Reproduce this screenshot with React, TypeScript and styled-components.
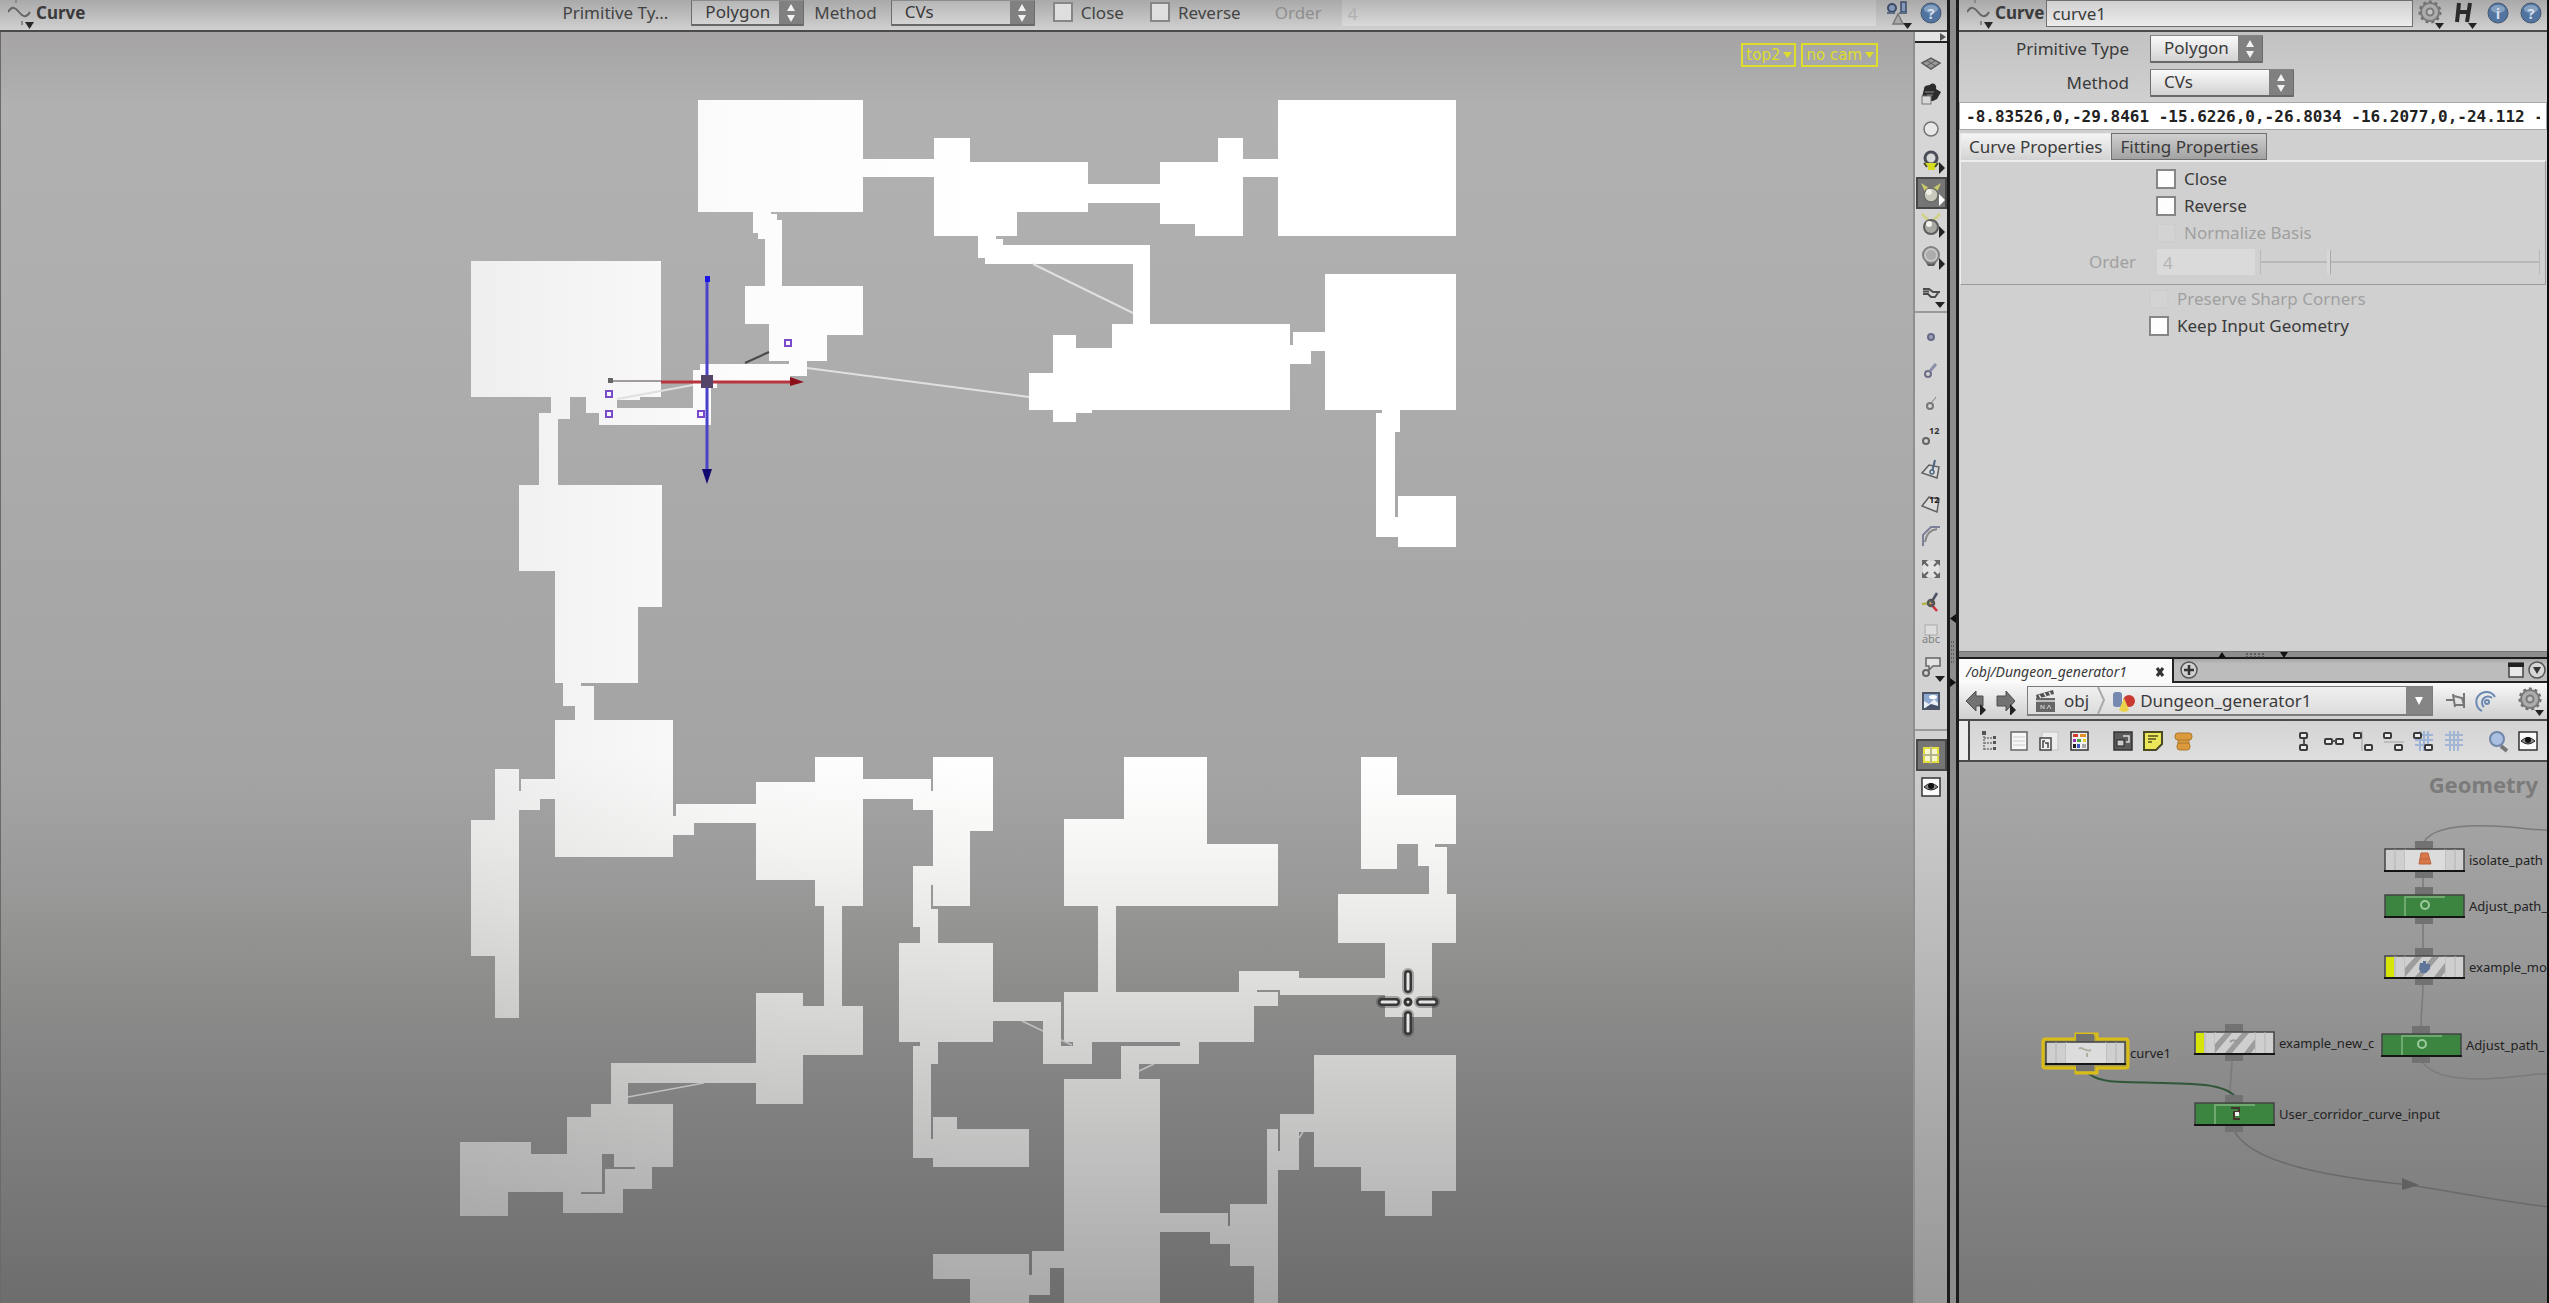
import React from "react";
import styled, { createGlobalStyle, css } from "styled-components";

const UI_FONT = `"Noto Sans", "Open Sans", sans-serif`;

const Global = createGlobalStyle`
  *, *::before, *::after { box-sizing: border-box; }
  html, body { margin: 0; height: 100%; background: #8c8c8c; }
  body { font-family: ${UI_FONT}; font-size: 17px; line-height: 20px; color: #3a3a3a; overflow: hidden; }
  button, input, select { font: inherit; color: inherit; margin: 0; }
`;

/* ---------- frame ---------- */

const Desktop = styled.div`
  display: grid;
  grid-template-columns: minmax(0, 1fr) 12px 590px;
  height: 100vh;
`;

const LeftPane = styled.main`
  display: flex;
  flex-direction: column;
  min-width: 0;
  min-height: 0;
`;

const RightPane = styled.aside`
  display: grid;
  grid-template-rows: minmax(0, 651fr) 8px minmax(0, 644fr);
  min-height: 0;
  border-right: 2px solid #0c0c0c;
`;

const VSplit = styled.div`
  position: relative;
  background: #8d8d8d;
  border-left: 3px solid #1c1c1c;
  border-right: 3px solid #1c1c1c;
`;

const VHandle = styled.svg`
  position: absolute;
  left: 0;
  top: 47%;
  width: 8px;
  height: 90px;
`;

const HSplit = styled.div`
  background: #8d8d8d;
  border-top: 1px solid #777;
  border-bottom: 2px solid #1c1c1c;
  display: flex;
  justify-content: center;
`;

const Svg = styled.svg<{ $w?: number; $h?: number }>`
  display: block;
  flex: none;
  width: ${(p) => p.$w ?? 24}px;
  height: ${(p) => p.$h ?? 24}px;
`;

/* ---------- shared controls ---------- */

const IconButton = styled.button<{ $active?: boolean; $w?: number; $h?: number }>`
  display: flex;
  align-items: center;
  justify-content: center;
  flex: none;
  width: ${(p) => p.$w ?? 30}px;
  height: ${(p) => p.$h ?? 30}px;
  padding: 0;
  border: 0;
  background: none;
  ${(p) =>
    p.$active &&
    css`
      background: #757575;
      border: 2px solid #484848;
    `}
`;

const Bar = styled.header`
  display: flex;
  align-items: flex-start;
  flex: none;
  height: 32px;
  background: linear-gradient(#a9a9a9, #d0d0d0);
  border-bottom: 2px solid #4a4a4a;
  padding-left: 8px;
`;

const BarTitle = styled.strong`
  font-weight: 700;
  line-height: 25px;
`;

const BarLabel = styled.label<{ $off?: boolean }>`
  line-height: 26px;
  white-space: nowrap;
  color: ${(p) => (p.$off ? "#8f8f8f" : "#444")};
`;

const Combo = styled.span<{ $w: number; $flat?: boolean }>`
  display: flex;
  flex: none;
  width: ${(p) => p.$w}px;
  height: ${(p) => (p.$flat ? 26 : 28)}px;
  border: 1px solid #6c6c6c;
  border-top-color: ${(p) => (p.$flat ? "#8c8c8c" : "#848484")};
  border-bottom: 2px solid #686868;
  background: ${(p) =>
    p.$flat ? "linear-gradient(#b6b6b6, #d4d4d4)" : "linear-gradient(#fafafa, #d2d2d2)"};
  border-radius: 1px;
  select {
    appearance: none;
    flex: 1;
    min-width: 0;
    border: 0;
    background: none;
    padding: 0 0 2px 13px;
    line-height: 20px;
  }
`;

const ComboArrows = styled.span`
  display: flex;
  align-items: center;
  justify-content: center;
  width: 24px;
  background: #808080;
`;

const Check = styled.input<{ $dim?: boolean }>`
  appearance: none;
  flex: none;
  width: 20px;
  height: 20px;
  border: 2px solid #868686;
  background: ${(p) => (p.$dim ? "#dedede" : "#fdfdfd")};
  &:disabled {
    border-color: #cecece;
    background: #d3d3d3;
  }
`;

function Select({ id, value, w, flat, label }: { id: string; value: string; w: number; flat?: boolean; label?: string }) {
  return (
    <Combo $w={w} $flat={flat}>
      <select id={id} defaultValue={value} aria-label={label}>
        <option>{value}</option>
      </select>
      <ComboArrows aria-hidden="true">
        <Svg $w={10} $h={22} viewBox="0 0 10 22">
          <path d="M5 2 L9 9 H1 Z M5 20 L9 13 H1 Z" fill="#f2f2f2" />
        </Svg>
      </ComboArrows>
    </Combo>
  );
}

/* ---------- icons ---------- */

const CurveIcon = () => (
  <Svg $w={28} $h={30} viewBox="0 0 28 30">
    <path d="M0 12 C4 5 8 8 11 12 S18 19 22 12" fill="none" stroke="#666" strokeWidth="2" />
    <path d="M8 0 V3 M14 21 V25" stroke="#888" strokeWidth="2" />
    <path d="M17 22 h9 l-4.500 7 z" fill="#262626" />
  </Svg>
);

const Badge = ({ letter, label }: { letter: string; label: string }) => (
  <IconButton $h={28} $w={33} aria-label={label}>
    <Svg viewBox="0 0 24 24">
      <circle cx="12" cy="11" r="10" fill="#5274a0" stroke="#42566f" />
      <ellipse cx="12" cy="7" rx="7" ry="4" fill="#86a0c0" />
      <text x="12" y="17" textAnchor="middle" fontFamily={UI_FONT} fontWeight="700" fontSize="15" fill="#d3dcea">
        {letter}
      </text>
    </Svg>
  </IconButton>
);

const GearShape = () => (
  <>
    <circle cx="12" cy="12" r="9" fill="#acacac" stroke="#7a7a7a" strokeWidth="2" />
    <circle cx="12" cy="12" r="10.500" fill="none" stroke="#6e6e6e" strokeWidth="2" strokeDasharray="3 3" />
    <circle cx="12" cy="12" r="3.500" fill="#c4c4c4" stroke="#7a7a7a" strokeWidth="2" />
    <path d="M17 23 h9 l-4.500 6 z" fill="#222" />
  </>
);

const Flag = ({ light }: { light?: boolean }) => <path d="M22 15 l6 6 l-6 6 z" fill={light ? "#fff" : "#222"} />;

/* each glyph is drawn on a 28 x 28 grid centred in its slot */
const strip: Record<string, React.ReactNode> = {
  plane: (
    <g fill="none" stroke="#5c5c5c">
      <path d="M5 14 L14 9 L23 14 L14 20 Z" fill="#999" strokeWidth="1.500" />
      <path d="M9.500 11.500 L18.500 17 M18.500 11.500 L9.500 17" />
    </g>
  ),
  camera: (
    <g>
      <path d="M7 9 C7 4 13 6 14 4 C18 2 20 7 19 9 L24 12 L20 19 L16 21 H9 L5 17 Z" fill="#2c2c2c" />
      <path d="M8 12 h9 M10 15 h6" stroke="#8a8a8a" />
      <rect x="5" y="16" width="9" height="8" fill="#d8d8d8" stroke="#777" />
    </g>
  ),
  light: <circle cx="14" cy="14" r="7" fill="#e8e8e8" stroke="#737373" strokeWidth="1.500" />,
  headlight: (
    <g>
      <circle cx="14" cy="11" r="6" fill="#d8d8d8" stroke="#4b4e58" strokeWidth="3" />
      <path d="M7 16 h14 l-3 3 v4 h-7 v-4 z" fill="#d8dc1e" />
      <path d="M7 16 l3 4 M21 16 l-3 4" stroke="#4a4a20" strokeWidth="2" />
      <Flag />
    </g>
  ),
  normal: (
    <g>
      <path d="M4 4 l8 5 l-4 4 z M24 4 l-8 5 l4 4 z" fill="#c8ca6a" />
      <circle cx="14" cy="16" r="7" fill="#c9c9bd" stroke="#6d6d66" strokeWidth="1.500" />
      <circle cx="12" cy="13" r="3" fill="#efefe8" />
      <Flag light />
    </g>
  ),
  quality: (
    <g>
      <path d="M5 3 l6 6 M23 3 l-6 6" stroke="#d0d28a" strokeWidth="3" />
      <circle cx="14" cy="16" r="7" fill="#a9a9a4" stroke="#5c5c5c" strokeWidth="2" />
      <circle cx="12" cy="13" r="3" fill="#f3f3ee" />
      <Flag />
    </g>
  ),
  shadow: (
    <g>
      <path d="M8 18 h12 l-3 5 h-6 z" fill="#5b5b5b" />
      <circle cx="14" cy="12" r="8" fill="#c6c6c6" stroke="#808080" strokeWidth="2" />
      <circle cx="14" cy="12" r="5" fill="#acacac" />
      <Flag />
    </g>
  ),
  hand: (
    <g>
      <path d="M6 9 h6 l4 3 h7 M6 14 h5 l3 3 h4 l3 -4 M6 11.500 h6" fill="none" stroke="#4b4b4b" strokeWidth="2" />
      <path d="M18 22 h10 l-5 6 z" fill="#222" />
    </g>
  ),
  point: <circle cx="14" cy="13" r="3" fill="#9c9fb5" stroke="#666987" strokeWidth="2" />,
  normalPoint: (
    <g fill="none" stroke="#6c6f86" strokeWidth="2">
      <circle cx="11" cy="17" r="3" />
      <path d="M13 14 l6 -7" strokeWidth="3" stroke="#8b8fa9" />
    </g>
  ),
  trail: (
    <g fill="none" stroke="#777" strokeWidth="2">
      <circle cx="13" cy="16" r="3" />
      <path d="M15 12 l4 -5" strokeWidth="1" />
    </g>
  ),
  pointNumber: (
    <g>
      <circle cx="9" cy="18" r="3" fill="none" stroke="#666" strokeWidth="2" />
      <text x="12" y="11" fontSize="9" fontWeight="700" fontFamily={UI_FONT} fill="#333">12</text>
    </g>
  ),
  primNormal: (
    <g fill="#dcdcdc" stroke="#5f5f5f" strokeWidth="1.500">
      <path d="M5 17 L12 9 L22 11 L20 22 Z" />
      <path d="M15 16 L18 4" stroke="#4d6680" strokeWidth="2" />
      <circle cx="15" cy="16" r="2" stroke="#4d6680" />
    </g>
  ),
  primNumber: (
    <g>
      <path d="M5 17 L12 8 L22 10 L20 23 Z" fill="#dcdcdc" stroke="#5f5f5f" strokeWidth="1.500" />
      <text x="12" y="14" fontSize="9" fontWeight="700" fontFamily={UI_FONT} fill="#222">12</text>
    </g>
  ),
  hull: (
    <g fill="none" strokeWidth="2">
      <path d="M6 24 V13 L14 5 H23" stroke="#7c8098" />
      <path d="M8 20 C9 13 13 8 20 7" stroke="#858585" />
    </g>
  ),
  bounds: (
    <g>
      <rect x="6" y="6" width="16" height="16" fill="#e2e2e2" />
      <path d="M5 5 h6 l-6 6 z M23 5 h-6 l6 6 z M5 23 h6 l-6 -6 z M23 23 h-6 l6 -6 z" fill="#666" />
      <path d="M6 6 l5 5 M22 6 l-5 5 M6 22 l5 -5 M22 22 l-5 -5" stroke="#666" strokeWidth="2" />
    </g>
  ),
  axes: (
    <g fill="none" strokeWidth="2.500">
      <path d="M14 15 L20 5" stroke="#4a5364" />
      <path d="M14 15 L5 16" stroke="#b5b34e" />
      <path d="M14 16 L20 23" stroke="#d02c3a" />
      <circle cx="14" cy="15" r="3" stroke="#555" />
    </g>
  ),
  label: (
    <g>
      <rect x="8" y="4" width="12" height="10" fill="#dcdcdc" stroke="#aaa" />
      <text x="14" y="22" textAnchor="middle" fontSize="11" fontFamily={UI_FONT} fill="#808080">abc</text>
    </g>
  ),
  note: (
    <g>
      <path d="M9 4 h14 v8 h-7 l-4 4 v-4 h-3 z" fill="#e3e3e3" stroke="#666" strokeWidth="1.500" />
      <circle cx="9" cy="19" r="3" fill="none" stroke="#666" strokeWidth="2" />
      <path d="M18 22 h10 l-5 6 z" fill="#222" />
    </g>
  ),
  image: (
    <g>
      <rect x="6" y="6" width="16" height="16" fill="#8ea9cf" stroke="#4c5666" strokeWidth="2" />
      <path d="M7 20 V14 l5 3 l5 -5 l4 4 v5 h-14 z" fill="#e9eef5" />
      <path d="M8 21 l6 -4 l7 2 v2 z" fill="#47536b" />
      <ellipse cx="16" cy="10" rx="4" ry="2" fill="#fff" />
    </g>
  ),
  grid: (
    <g>
      <rect x="6" y="6" width="16" height="16" fill="#e4e23a" />
      <path d="M8 8 h5 v5 h-5 z M15 8 h5 v5 h-5 z M8 15 h5 v5 h-5 z M15 15 h5 v5 h-5 z" fill="#f5f5cf" />
      <path d="M14 5 V23 M5 14 H23" stroke="#a8a8a0" strokeWidth="1.500" />
    </g>
  ),
  eye: (
    <g>
      <rect x="5" y="5" width="18" height="18" fill="#fafafa" stroke="#333" strokeWidth="1.500" />
      <path d="M7 14 Q14 7 21 14 Q14 20 7 14 Z" fill="#8b8b8b" stroke="#222" />
      <circle cx="14" cy="13" r="3" fill="#111" />
    </g>
  ),
};

/* ---------- 3D viewport ---------- */

const Stage = styled.div`
  display: flex;
  flex: 1;
  min-height: 0;
`;

const Viewport = styled.section`
  position: relative;
  flex: 1;
  min-width: 0;
  overflow: hidden;
  background: linear-gradient(
    #a6a4a5 0%, #b1b1b1 6%, #aeaeae 22%, #a9a9a9 37%, #a4a4a4 58%, #9b9b9b 66%,
    #90908e 73%, #868686 80%, #7c7c7c 88%, #727272 96%, #6d6d6d 100%
  );
  border-left: 1px solid #6a6a6a;
`;

const Scene = styled.svg`
  display: block;
  width: 100%;
  height: 100%;
`;

const CameraMenus = styled.nav`
  position: absolute;
  top: 11px;
  right: 35px;
  display: flex;
  gap: 5px;
`;

const CameraButton = styled.button`
  display: flex;
  align-items: center;
  gap: 3px;
  height: 24px;
  padding: 0 2px 0 3px;
  border: 2px solid #dede2a;
  background: none;
  font-family: "DejaVu Sans", sans-serif;
  font-size: 15px;
  color: #dede2a;
  line-height: 20px;
`;

const dungeon =
  "698,100 863,100 863,159 934,159 934,138 970,138 970,162 1088,162 1088,184 1160,184 1160,162 1218,162 1218,138 1243,138 1243,159 1278,159 1278,100 1456,100 1456,236 1278,236 1278,177 1243,177 1243,236 1195,236 1195,224 1160,224 1160,203 1088,203 1088,212 1017,212 1017,236 996,236 996,239 1003,239 1003,245 1150,245 1150,324 1290,324 1290,345 1293,345 1293,332 1325,332 1325,274 1456,274 1456,410 1400,410 1400,432 1395,432 1395,517 1398,517 1398,496 1456,496 1456,547 1398,547 1398,537 1376,537 1376,413 1382,413 1382,410 1325,410 1325,351 1311,351 1311,364 1290,364 1290,410 1092,410 1092,413 1076,413 1076,422 1053,422 1053,410 1029,410 1029,373 1053,373 1053,335 1076,335 1076,348 1112,348 1112,324 1133,324 1133,264 985,264 985,258 978,258 978,236 934,236 934,177 863,177 863,212 771,212 771,214 777,214 777,220 782,220 782,286 863,286 863,335 827,335 827,361 807,361 807,376 790,376 790,381 717,381 717,388 711,388 711,425 599,425 599,413 586,413 586,397 570,397 570,419 558,419 558,485 662,485 662,607 638,607 638,683 581,683 581,686 594,686 594,720 673,720 673,816 676,816 676,804 756,804 756,782 815,782 815,757 863,757 863,779 931,779 931,791 933,791 933,757 993,757 993,831 970,831 970,906 933,906 933,885 931,885 931,909 938,909 938,943 993,943 993,1002 1061,1002 1061,1046 1073,1046 1073,1042 1064,1042 1064,992 1098,992 1098,906 1064,906 1064,819 1124,819 1124,757 1207,757 1207,844 1278,844 1278,906 1116,906 1116,992 1239,992 1239,971 1299,971 1299,978 1385,978 1385,943 1338,943 1338,894 1429,894 1429,866 1418,866 1418,844 1397,844 1397,869 1361,869 1361,757 1397,757 1397,795 1456,795 1456,844 1435,844 1435,847 1447,847 1447,894 1456,894 1456,943 1432,943 1432,1017 1385,1017 1385,995 1280,995 1280,990 1257,990 1257,992 1278,992 1278,1006 1254,1006 1254,1042 1199,1042 1199,1064 1139,1064 1139,1079 1160,1079 1160,1213 1228,1213 1228,1226 1230,1226 1230,1204 1267,1204 1267,1129 1278,1129 1278,1151 1280,1151 1280,1114 1314,1114 1314,1055 1456,1055 1456,1191 1432,1191 1432,1216 1385,1216 1385,1191 1361,1191 1361,1167 1314,1167 1314,1132 1299,1132 1299,1170 1278,1170 1278,1310 1254,1310 1254,1266 1230,1266 1230,1244 1210,1244 1210,1232 1160,1232 1160,1310 1064,1310 1064,1268 1050,1268 1050,1295 1029,1295 1029,1310 970,1310 970,1279 933,1279 933,1254 1029,1254 1029,1275 1032,1275 1032,1251 1064,1251 1064,1079 1121,1079 1121,1046 1180,1046 1180,1042 1092,1042 1092,1064 1043,1064 1043,1021 993,1021 993,1042 938,1042 938,1064 931,1064 931,1139 933,1139 933,1117 957,1117 957,1129 1029,1129 1029,1167 933,1167 933,1158 913,1158 913,1046 920,1046 920,1042 899,1042 899,943 920,943 920,927 913,927 913,866 933,866 933,810 913,810 913,799 863,799 863,906 842,906 842,1006 863,1006 863,1055 803,1055 803,1104 756,1104 756,1083 628,1083 628,1104 673,1104 673,1167 652,1167 652,1189 623,1189 623,1213 563,1213 563,1192 508,1192 508,1216 460,1216 460,1142 531,1142 531,1154 567,1154 567,1117 591,1117 591,1104 611,1104 611,1063 756,1063 756,993 803,993 803,1006 824,1006 824,906 815,906 815,880 756,880 756,823 694,823 694,835 673,835 673,857 555,857 555,799 540,799 540,810 519,810 519,1018 495,1018 495,956 471,956 471,820 495,820 495,769 519,769 519,791 521,791 521,779 555,779 555,720 575,720 575,706 563,706 563,683 555,683 555,571 519,571 519,485 539,485 539,413 551,413 551,397 471,397 471,261 661,261 661,397 640,397 640,400 617,400 617,408 693,408 693,370 700,370 700,364 789,364 789,361 769,361 769,324 745,324 745,286 765,286 765,239 758,239 758,233 753,233 753,212 698,212";

const crosshair = "M1408 974 V989 M1408 1015 V1031 M1382 1002 H1396 M1420 1002 H1434";

const points = [[788, 343], [609, 394], [609, 414], [701, 414]];

function DungeonScene() {
  return (
    <Scene role="img" aria-label="Dungeon layout, top view">
      <defs>
        <linearGradient id="fall" gradientUnits="userSpaceOnUse" x1="0" y1="0" x2="0" y2="1303">
          <stop offset="0" stopColor="#fff" />
          <stop offset="0.58" stopColor="#fff" />
          <stop offset="0.65" stopColor="#f6f6f5" />
          <stop offset="0.7" stopColor="#ebebea" />
          <stop offset="0.77" stopColor="#dadad9" />
          <stop offset="0.84" stopColor="#cacac9" />
          <stop offset="0.92" stopColor="#b9b9b9" />
          <stop offset="1" stopColor="#a8a8a8" />
        </linearGradient>
        <linearGradient id="side" gradientUnits="userSpaceOnUse" x1="470" y1="0" x2="1000" y2="0">
          <stop offset="0" stopColor="#000" stopOpacity="0.065" />
          <stop offset="0.5" stopColor="#000" stopOpacity="0.014" />
          <stop offset="1" stopColor="#000" stopOpacity="0" />
        </linearGradient>
      </defs>
      <g transform="translate(-1 -32)">
        <polygon points={dungeon} fill="url(#fall)" />
        <polygon points={dungeon} fill="url(#side)" />
        <path d="M602 1154 H614 V1167 H635 V1169 H605 V1194 H581 V1192 H602 Z" fill="#7b7b7b" />
        <g fill="none" stroke="#e0e0e0" strokeWidth="2">
          <path d="M1033 264 L1133 313 M807 368 L1029 397" />
          <path d="M617 399 L693 385" />
          <path d="M628 1097 L704 1083 M1022 1021 L1043 1031 M1139 1071 L1154 1064 M1061 1040 L1072 1045 M1299 1138 L1303 1132" stroke="#c0c0c0" strokeWidth="1.500" />
        </g>
        <path d="M745 363 L769 352" stroke="#484848" strokeWidth="2" />
        <path d="M611 381 H661" stroke="#a39c9c" strokeWidth="2" />
        <path d="M661 382 H792" stroke="#b8343f" strokeWidth="3" />
        <path d="M790 377 L804 382 L790 386 Z" fill="#8d0f1a" />
        <rect x="608" y="378" width="5" height="5" fill="#666" />
        <path d="M707 278 V470" stroke="#4a42c8" strokeWidth="3" />
        <rect x="705" y="276" width="5" height="6" fill="#1b16e6" />
        <path d="M702 469 H712 L707 484 Z" fill="#120a70" />
        <rect x="701" y="375" width="12" height="13" fill="#544467" />
        {points.map(([x, y]) => (
          <rect key={`${x}-${y}`} x={x - 3} y={y - 3} width="6" height="6" fill="#f7f5fb" stroke="#7a4bc8" strokeWidth="2" />
        ))}
        <g strokeLinecap="round" fill="none">
          <path d={crosshair} stroke="#222" strokeOpacity="0.3" strokeWidth="12" />
          <path d={crosshair} stroke="#383838" strokeWidth="8" />
          <path d={crosshair} stroke="#e6e6e6" strokeWidth="3" />
          <circle cx="1408" cy="1002" r="3" stroke="#333" strokeWidth="3" />
        </g>
      </g>
    </Scene>
  );
}

const Strip = styled.nav`
  display: flex;
  flex-direction: column;
  align-items: stretch;
  flex: none;
  width: 34px;
  border-left: 2px solid #8f8f8f;
  background: linear-gradient(#d6d6d6 0%, #d2d2d2 55%, #c8c8c8 62%, #a9a9a9 85%, #989898 100%);
`;

const StripHead = styled.div`
  display: flex;
  justify-content: flex-end;
  align-items: center;
  height: 11px;
  margin-bottom: 4px;
  background: #e4e4e4;
  border-bottom: 2px solid #222;
`;

const StripGroup = styled.div<{ $gap?: number }>`
  display: flex;
  flex-direction: column;
  align-items: center;
  padding-bottom: ${(p) => p.$gap ?? 4}px;
`;

const StripRule = styled.hr`
  width: 100%;
  margin: 0;
  border: 0;
  border-top: 2px solid #9a9a9a;
`;

function StripButton({ name, h = 32, active }: { name: string; h?: number; active?: boolean }) {
  return (
    <IconButton $w={31} $h={h} $active={active} aria-label={name}>
      <Svg $w={28} $h={28} viewBox="0 0 28 28">
        {strip[name]}
      </Svg>
    </IconButton>
  );
}

/* ---------- operation toolbar ---------- */

const Field = styled.span<{ $gap: number; $after?: number }>`
  display: flex;
  align-items: flex-start;
  flex: none;
  gap: ${(p) => p.$gap}px;
  margin-right: ${(p) => p.$after ?? 0}px;
`;

const Spacer = styled.span<{ $w: number }>`
  flex: 0 1 ${(p) => p.$w}px;
`;

const GhostInput = styled.input`
  flex: 1;
  min-width: 0;
  height: 26px;
  margin-right: 8px;
  padding: 0 6px;
  border: 0;
  background: linear-gradient(#b5b5b5, #d9d9d9);
  &:disabled { color: #b0b0b0; }
`;

const TopCheck = styled(Check)`
  margin-top: 2px;
`;

function OperationBar() {
  return (
    <Bar>
      <CurveIcon />
      <BarTitle>Curve</BarTitle>
      <Spacer $w={477} />
      <Field $gap={23} $after={10}>
        <BarLabel htmlFor="op-type">Primitive Ty...</BarLabel>
        <Select id="op-type" value="Polygon" w={113} flat />
      </Field>
      <Field $gap={14} $after={18}>
        <BarLabel htmlFor="op-method">Method</BarLabel>
        <Select id="op-method" value="CVs" w={144} flat />
      </Field>
      <Field $gap={8} $after={26}>
        <TopCheck type="checkbox" id="op-close" $dim />
        <BarLabel htmlFor="op-close">Close</BarLabel>
      </Field>
      <Field $gap={8} $after={34}>
        <TopCheck type="checkbox" id="op-reverse" $dim />
        <BarLabel htmlFor="op-reverse">Reverse</BarLabel>
      </Field>
      <Field $gap={20} $after={20}>
        <BarLabel htmlFor="op-order" $off>Order</BarLabel>
      </Field>
      <GhostInput id="op-order" defaultValue="4" disabled />
      <IconButton $w={30} aria-label="Handle options">
        <Svg $w={28} $h={30} viewBox="0 0 28 30">
          <circle cx="7" cy="8" r="4" fill="#8398b8" stroke="#3c4b66" strokeWidth="2" />
          <rect x="16" y="2" width="5" height="10" fill="#8398b8" stroke="#3c4b66" strokeWidth="1.500" />
          <path d="M2 13 h8 M14 13 h8" stroke="#5c6b86" strokeWidth="2" />
          <path d="M13 14 l5 10 h-10 z" fill="#aaa" stroke="#777" strokeWidth="1.500" />
          <path d="M18 23 h9 l-4.500 6 z" fill="#222" />
        </Svg>
      </IconButton>
      <Badge letter="?" label="Help" />
    </Bar>
  );
}

/* ---------- parameter editor ---------- */

const Params = styled.section`
  background: #d0d0d0;
  min-height: 0;
  overflow: hidden;
`;

const NameInput = styled.input`
  flex: 1;
  min-width: 0;
  height: 27px;
  margin-left: 2px;
  padding: 0 5px;
  border: 1px solid #6f6f6f;
  background: linear-gradient(#d0d0d0, #ececec);
`;

const ParamRows = styled.div`
  display: flex;
  flex-direction: column;
  gap: 6px;
  padding: 3px 0 5px;
  background: linear-gradient(#c2c2c2, #d0d0d0);
`;

const ParamRow = styled.div`
  display: grid;
  grid-template-columns: 170px 1fr;
  align-items: center;
  column-gap: 21px;
`;

const ParamLabel = styled.label<{ $off?: boolean }>`
  text-align: right;
  white-space: nowrap;
  color: ${(p) => (p.$off ? "#a0a0a0" : "#3a3a3a")};
`;

const CoordInput = styled.input`
  display: block;
  width: 100%;
  height: 28px;
  padding: 0 6px;
  border: 1px solid #a8a8a8;
  background: #fff;
  font-family: "DejaVu Sans Mono", monospace;
  font-size: 16px;
  font-weight: 700;
  color: #222;
`;

const Tabs = styled.div`
  display: flex;
  margin-top: 3px;
  padding-left: 1px;
`;

const Tab = styled.button<{ $on?: boolean }>`
  height: 27px;
  padding: 0 8px;
  border: 1px solid ${(p) => (p.$on ? "#e8e8e8" : "#6f6f6f")};
  border-bottom: ${(p) => (p.$on ? "0" : "1px solid #6f6f6f")};
  background: ${(p) => (p.$on ? "linear-gradient(#f5f5f5, #d2d2d2)" : "linear-gradient(#d0d0d0, #a2a2a2)")};
  white-space: nowrap;
`;

const TabBody = styled.div`
  display: flex;
  flex-direction: column;
  height: 125px;
  margin: 0 1px;
  padding: 3px 0 0;
  border: 1px solid #9b9b9b;
  border-top: 2px solid #ededed;
  border-left-color: #ededed;
`;

const CheckRow = styled.div<{ $indent: number; $h?: number }>`
  display: flex;
  align-items: center;
  gap: 8px;
  height: ${(p) => p.$h ?? 27}px;
  padding-left: ${(p) => p.$indent}px;
`;

const OrderRow = styled.div`
  display: grid;
  grid-template-columns: 175px 98px 1fr;
  align-items: center;
  column-gap: 21px;
  height: 32px;
  padding-right: 5px;
`;

const OrderInput = styled.input`
  width: 98px;
  height: 26px;
  padding: 0 6px;
  border: 0;
  background: #dadada;
  &:disabled { color: #b4b4b4; }
`;

const Slider = styled.input`
  appearance: none;
  display: block;
  width: calc(100% + 16px);
  height: 24px;
  margin-left: -16px;
  background: linear-gradient(#b9b9b9, #b9b9b9) center / 100% 2px no-repeat;
  border-left: 1px solid #b9b9b9;
  border-right: 1px solid #b9b9b9;
  &::-webkit-slider-thumb {
    appearance: none;
    width: 4px;
    height: 24px;
    border-right: 1px solid #a8a8a8;
    background: #d8d8d8;
  }
`;

function ParamCheck({ id, label, indent, off, h }: { id: string; label: string; indent: number; off?: boolean; h?: number }) {
  return (
    <CheckRow $indent={indent} $h={h}>
      <Check type="checkbox" id={id} disabled={off} />
      <ParamLabel htmlFor={id} $off={off}>{label}</ParamLabel>
    </CheckRow>
  );
}

function ParameterPane() {
  return (
    <Params>
      <Bar>
        <CurveIcon />
        <BarTitle>Curve</BarTitle>
        <NameInput aria-label="Node name" defaultValue="curve1" />
        <IconButton $w={34} aria-label="Settings">
          <Svg $w={30} $h={30} viewBox="-3 0 30 30"><GearShape /></Svg>
        </IconButton>
        <IconButton $w={34} aria-label="Houdini help">
          <Svg $w={28} $h={30} viewBox="-1 0 28 30">
            <path d="M8 3 L6 22 M19 3 L16 22 M7 12 H18" stroke="#2a2a2a" strokeWidth="4" fill="none" />
            <path d="M17 23 h9 l-4.500 6 z" fill="#222" />
          </Svg>
        </IconButton>
        <Badge letter="i" label="Info" />
        <Badge letter="?" label="Help" />
      </Bar>
      <ParamRows>
        <ParamRow>
          <ParamLabel htmlFor="p-type">Primitive Type</ParamLabel>
          <Select id="p-type" value="Polygon" w={113} />
        </ParamRow>
        <ParamRow>
          <ParamLabel htmlFor="p-method">Method</ParamLabel>
          <Select id="p-method" value="CVs" w={144} />
        </ParamRow>
      </ParamRows>
      <CoordInput aria-label="Coordinates" defaultValue="-8.83526,0,-29.8461 -15.6226,0,-26.8034 -16.2077,0,-24.112 -16.2077,0,-20.4" />
      <Tabs role="tablist">
        <Tab role="tab" aria-selected $on>Curve Properties</Tab>
        <Tab role="tab" aria-selected={false}>Fitting Properties</Tab>
      </Tabs>
      <TabBody>
        <ParamCheck id="p-close" label="Close" indent={195} />
        <ParamCheck id="p-reverse" label="Reverse" indent={195} />
        <ParamCheck id="p-basis" label="Normalize Basis" indent={195} off />
        <OrderRow>
          <ParamLabel htmlFor="p-order" $off>Order</ParamLabel>
          <OrderInput id="p-order" defaultValue="4" disabled />
          <Slider type="range" aria-label="Order" min={0} max={100} defaultValue={24} disabled />
        </OrderRow>
      </TabBody>
      <ParamCheck id="p-sharp" label="Preserve Sharp Corners" indent={190} off />
      <ParamCheck id="p-keep" label="Keep Input Geometry" indent={190} />
    </Params>
  );
}

/* ---------- network editor ---------- */

const Network = styled.section`
  display: flex;
  flex-direction: column;
  min-height: 0;
`;

const NetTabs = styled.div`
  display: flex;
  align-items: stretch;
  flex: none;
  height: 24px;
  background: linear-gradient(#a8a8a8, #bcbcbc 20%, #bcbcbc);
`;

const NetTab = styled.button`
  display: flex;
  align-items: center;
  justify-content: space-between;
  width: 215px;
  padding: 2px 7px 0;
  border: 0;
  border-right: 2px solid #222;
  background: #fbfbfb;
  font-size: 14px;
  font-style: italic;
`;

const NetTabRest = styled.div`
  display: flex;
  align-items: center;
  flex: 1;
  padding: 0 0 0 3px;
  border-bottom: 2px solid #222;
`;

const PathBar = styled.div`
  display: flex;
  align-items: center;
  flex: none;
  height: 36px;
  padding-left: 1px;
  background: linear-gradient(#f8f8f8, #cfcfcf);
`;

const PathBox = styled.div`
  display: flex;
  align-items: stretch;
  flex: 1;
  height: 30px;
  margin: 0 8px 0 5px;
  border: 1px solid #7c7c7c;
  border-bottom-width: 2px;
  background: linear-gradient(#f0f0f0, #dcdcdc);
`;

const Crumb = styled.button`
  display: flex;
  align-items: center;
  gap: 5px;
  padding: 0 5px;
  border: 0;
  background: none;
`;

const PathDrop = styled.button`
  display: flex;
  align-items: center;
  justify-content: center;
  width: 26px;
  margin-left: auto;
  padding: 0;
  border: 0;
  background: #858585;
`;

const Tools = styled.div`
  display: flex;
  align-items: center;
  flex: none;
  height: 43px;
  border-top: 2px solid #4a4a4a;
  border-bottom: 2px solid #4a4a4a;
  background: linear-gradient(#d4d4d4, #dedede);
`;

const ToolGrip = styled.div`
  align-self: stretch;
  width: 11px;
  margin-right: 4px;
  border-right: 2px solid #444;
  background: #ececec;
`;

const ToolGroup = styled.div<{ $after?: number; $push?: boolean }>`
  display: flex;
  margin-right: ${(p) => p.$after ?? 0}px;
  margin-left: ${(p) => (p.$push ? "auto" : 0)};
`;

const small = (x: number, y: number) => (
  <rect key={`${x}-${y}`} x={x} y={y} width="7" height="5" rx="1" fill="#eee" stroke="#3c3c3c" strokeWidth="2" />
);
const bars = "M10 4 V24 M14 4 V24 M18 4 V24 M5 8 H23 M5 13 H23 M5 18 H23";

const tools: Record<string, React.ReactNode> = {
  tree: (
    <g stroke="#777" fill="#555" strokeWidth="1.500">
      <path d="M9 6 V23 M9 11 H18 M9 16 H18 M9 22 H18" fill="none" strokeDasharray="2 1" />
      <path d="M7 4 h4 v4 h-4 z M18 9 h3 v3 h-3 z M18 14 h3 v3 h-3 z M18 20 h3 v3 h-3 z" stroke="none" />
    </g>
  ),
  list: (
    <g>
      <rect x="6" y="5" width="16" height="18" fill="#f7f7f7" stroke="#666" strokeWidth="1.500" />
      <path d="M8 10 H20 M8 14 H20 M8 18 H20" stroke="#ccc" />
    </g>
  ),
  page: (
    <g>
      <rect x="7" y="5" width="16" height="18" fill="#ececec" stroke="#c4c4c4" />
      <rect x="5" y="11" width="11" height="12" fill="#f0f0f0" stroke="#444" strokeWidth="1.500" />
      <path d="M8 21 V14 H10 M10 16 H13 V21" stroke="#444" fill="none" strokeWidth="1.500" />
    </g>
  ),
  palette: (
    <g>
      <rect x="6" y="5" width="17" height="18" fill="#f2f2f2" stroke="#333" strokeWidth="1.500" />
      <path d="M8 7 h5 v3 h-5 z" fill="#d23a2a" />
      <path d="M15 7 h6 v3 h-6 z" fill="#e0912a" />
      <path d="M8 12 h3 v3 h-3 z" fill="#9a2ac0" />
      <path d="M12 12 h4 v3 h-4 z" fill="#49a23a" />
      <path d="M18 12 h3 v3 h-3 z" fill="#e3d42a" />
      <path d="M8 17 h3 v4 h-3 z" fill="#222" />
      <path d="M12 17 h3 v4 h-3 z" fill="#3a55c0" />
      <path d="M17 17 h4 v4 h-4 z" fill="#aaa" />
    </g>
  ),
  box: (
    <g>
      <rect x="5" y="5" width="18" height="18" fill="#5b5b5b" stroke="#333" strokeWidth="1.500" />
      <rect x="8" y="13" width="7" height="6" fill="#ccc" stroke="#222" />
      <path d="M14 9 h6 v6 h-3" stroke="#ddd" fill="none" strokeWidth="1.500" />
    </g>
  ),
  sticky: (
    <g>
      <path d="M5 5 H23 V17 L17 23 H5 Z" fill="#ece65a" stroke="#4c4a20" strokeWidth="2" />
      <path d="M9 9 H19 M9 12 H17 M9 15 H13" stroke="#55521c" strokeWidth="1.500" />
    </g>
  ),
  dot: (
    <g fill="#dc9a3c" stroke="#a87830">
      <path d="M9 12 h11 v5 h-11 z" />
      <rect x="6" y="6" width="17" height="7" rx="3" />
      <rect x="8" y="16" width="13" height="7" rx="3" />
    </g>
  ),
  alignV: <g>{small(10, 6)}{small(10, 18)}<path d="M14 12 V17" stroke="#555" strokeWidth="2" /></g>,
  alignH: <g>{small(5, 12)}{small(16, 12)}<path d="M12 14 H16" stroke="#555" strokeWidth="2" /></g>,
  stairA: <g><path d="M12 4 V24" stroke="#bdbdbd" strokeWidth="2" />{small(4, 6)}{small(15, 18)}</g>,
  stairB: <g><path d="M4 15 H24" stroke="#bdbdbd" strokeWidth="2" />{small(4, 6)}{small(15, 18)}</g>,
  snap: <g><path d={bars} stroke="#9db4d6" strokeWidth="2" />{small(4, 6)}{small(15, 18)}</g>,
  gridlines: <path d={bars} stroke="#a3b7d4" strokeWidth="2" />,
  find: (
    <g>
      <path d="M17 19 L23 24" stroke="#777" strokeWidth="4" />
      <circle cx="13" cy="12" r="7" fill="#a9c0e2" stroke="#6f86a9" strokeWidth="2" />
    </g>
  ),
  eye: strip.eye,
};

const ToolSet = ({ names, after, push }: { names: string[]; after?: number; push?: boolean }) => (
  <ToolGroup $after={after} $push={push}>
    {names.map((n) => (
      <IconButton key={n} $w={30} aria-label={n}>
        <Svg $w={28} $h={28} viewBox="0 0 28 28">{tools[n]}</Svg>
      </IconButton>
    ))}
  </ToolGroup>
);

const Canvas = styled.div`
  position: relative;
  flex: 1;
  min-height: 0;
  overflow: hidden;
  background: linear-gradient(#a8a8a8, #989898 38%, #8b8b8b 58%, #777 100%);
`;

const Context = styled.h2`
  position: absolute;
  top: 7px;
  right: 9px;
  margin: 0;
  font-size: 22px;
  line-height: 30px;
  font-weight: 700;
  color: #7b7b7b;
`;

const Wires = styled.svg`
  position: absolute;
  inset: 0;
  width: 100%;
  height: 100%;
`;

const NodeBox = styled.div<{ $x: number; $y: number }>`
  position: absolute;
  left: ${(p) => p.$x}px;
  top: ${(p) => p.$y}px;
  display: flex;
  align-items: center;
  gap: 4px;
`;

const NodeName = styled.span`
  font-size: 13px;
  line-height: 20px;
  color: #222;
  white-space: nowrap;
`;

type NodeSpec = { id: string; name: string; x: number; y: number; kind: "plain" | "green" | "bypass"; on?: boolean; icon?: React.ReactNode };

const ring = <circle cx="41" cy="19" r="4" fill="none" stroke="#9ccb9c" strokeWidth="2" />;

const nodes: NodeSpec[] = [
  {
    id: "isolate", name: "isolate_path", x: 425, y: 78, kind: "plain",
    icon: <path d="M37 13 h7 l3 11 h-12 z M36 19 h9" fill="#d9774a" stroke="#b8643c" />,
  },
  { id: "adjust-a", name: "Adjust_path_", x: 425, y: 124, kind: "green", icon: ring },
  {
    id: "modify", name: "example_mo", x: 425, y: 185, kind: "bypass",
    icon: <path d="M36 16 h3 v-2 h3 v3 h4 v5 l-4 4 h-5 l-2 -4 z" fill="#5f7599" />,
  },
  { id: "curve", name: "curve1", x: 86, y: 271, kind: "plain", on: true, icon: <path d="M34 16 c3 -4 6 4 12 1 M42 20 v4" stroke="#b0b0a2" strokeWidth="2" fill="none" /> },
  { id: "new-curve", name: "example_new_c", x: 235, y: 261, kind: "bypass", icon: <path d="M36 19 q4 -4 9 1" stroke="#999" strokeWidth="2" fill="none" /> },
  { id: "adjust-b", name: "Adjust_path_", x: 422, y: 263, kind: "green", icon: ring },
  {
    id: "user", name: "User_corridor_curve_input", x: 235, y: 332, kind: "green",
    icon: <g><path d="M37 14 h8 v4 h-5 v7 h6" stroke="#40342c" strokeWidth="2" fill="none" /><rect x="41" y="18" width="4" height="4" fill="#eee" /></g>,
  },
];

function NodeTile({ kind, on, icon }: NodeSpec) {
  const green = kind === "green";
  return (
    <Svg $w={81} $h={39} viewBox="0 0 81 39" overflow="visible">
      {on && <path d="M31 1 H52 V6 H81 Q83 6 83 9 V33 Q83 35 81 35 H52 V40 H31 V35 H0 Q-2 35 -2 33 V9 Q-2 6 0 6 H31 Z" fill="#a39a50" stroke="#d9bd16" strokeWidth="3" />}
      <rect x="31" y="1" width="18" height="37" fill="#727272" />
      <rect x="1" y="9" width="79" height="22" fill={green ? "#3b8541" : "#cfcfcf"} stroke="#444" strokeWidth="1.500" />
      {!green && <path d="M11 9 V31 M21 9 V31 M61 9 V31 M71 9 V31" stroke="#b2b2b2" />}
      {kind === "plain" && <rect x="21" y="10" width="40" height="20" fill="#dcdcdc" />}
      {kind === "bypass" && (
        <g>
          <rect x="21" y="10" width="40" height="20" fill="#cfcfcf" />
          <path d="M21 21 L31 10 H38 L21 30 Z M31 30 L48 10 H55 L38 30 Z M50 30 L61 16 V25 L57 30 Z" fill="#9c9c9c" />
          <rect x="2" y="10" width="8" height="20" fill="#d6e408" />
        </g>
      )}
      {green && <path d="M21 30 V11 H61" stroke="#80b580" strokeWidth="1.500" fill="none" />}
      <path d="M0 31 H81" stroke="#151515" strokeWidth="2" />
      {icon}
    </Svg>
  );
}

function NetworkCanvas() {
  return (
    <Canvas>
      <Context>Geometry</Context>
      <Wires aria-hidden="true">
        <g transform="translate(-1959 -762)" fill="none" stroke="#7a7a7a" strokeWidth="1.500">
          <path d="M2424 842 C2432 828 2460 825 2490 826 S2530 830 2549 830" />
          <path d="M2423 876 V888 M2423 922 V950 M2423 984 C2423 1000 2421 1010 2421 1026" />
          <path d="M2421 1060 C2430 1076 2460 1081 2500 1078 S2535 1073 2549 1074" />
          <path d="M2232 1060 C2232 1070 2230 1082 2230 1096" />
          <path d="M2234 1130 C2250 1165 2340 1178 2410 1185 C2460 1193 2500 1201 2549 1207" stroke="#6a6a6a" />
          <path d="M2402 1178 L2419 1185 L2402 1190 Z" fill="#606060" stroke="none" />
          <path d="M2085 1069 C2090 1078 2105 1082 2125 1082 C2160 1083 2190 1083 2205 1085 C2222 1087 2232 1091 2237 1099" stroke="#31573a" strokeWidth="2" />
        </g>
      </Wires>
      {nodes.map((n) => (
        <NodeBox key={n.id} $x={n.x} $y={n.y}>
          <NodeTile {...n} />
          <NodeName>{n.name}</NodeName>
        </NodeBox>
      ))}
    </Canvas>
  );
}

function NetworkPane() {
  return (
    <Network>
      <NetTabs>
        <NetTab>
          <span>/obj/Dungeon_generator1</span>
          <Svg $w={10} $h={10} viewBox="0 0 10 10"><path d="M2 1 L8 9 M8 1 L2 9" stroke="#333" strokeWidth="3" /></Svg>
        </NetTab>
        <NetTabRest>
          <IconButton $w={24} $h={22} aria-label="New tab">
            <Svg $w={20} $h={20} viewBox="0 0 20 20">
              <circle cx="10" cy="10" r="8" fill="#cfcfcf" stroke="#555" strokeWidth="1.500" />
              <path d="M10 5 V15 M5 10 H15" stroke="#333" strokeWidth="2.500" />
            </Svg>
          </IconButton>
          <ToolGroup $push>
            <IconButton $w={22} $h={22} aria-label="Maximize pane">
              <Svg $w={18} $h={18} viewBox="0 0 18 18">
                <rect x="2" y="2" width="14" height="14" fill="#e8e8e8" stroke="#444" strokeWidth="1.500" />
                <path d="M1 4 H17" stroke="#222" strokeWidth="4" />
              </Svg>
            </IconButton>
            <IconButton $w={20} $h={22} aria-label="Pane menu">
              <Svg $w={20} $h={20} viewBox="0 0 20 20">
                <circle cx="10" cy="10" r="8" fill="#d6d6d6" stroke="#555" strokeWidth="1.500" />
                <path d="M6 7 H14 L10 14 Z" fill="#333" />
              </Svg>
            </IconButton>
          </ToolGroup>
        </NetTabRest>
      </NetTabs>
      <PathBar>
        <IconButton $w={31} aria-label="Back">
          <Svg $w={28} $h={28} viewBox="0 0 28 28">
            <path d="M4 14 L14 4 V9 H21 V19 H14 V24 Z" fill="#727272" stroke="#4f4f4f" />
            <path d="M18 17 l6 6 l-6 6 z" fill="#222" />
          </Svg>
        </IconButton>
        <IconButton $w={31} aria-label="Forward">
          <Svg $w={28} $h={28} viewBox="0 0 28 28">
            <path d="M22 14 L13 4 V9 H4 V19 H13 V24 Z" fill="#727272" stroke="#4f4f4f" />
            <path d="M17 17 l6 6 l-6 6 z" fill="#222" />
          </Svg>
        </IconButton>
        <PathBox>
          <Crumb>
            <Svg $w={26} $h={26} viewBox="0 0 26 26">
              <path d="M3 7 L20 2 L21 6 L4 11 Z" fill="#505050" />
              <rect x="3" y="10" width="19" height="14" fill="#666" />
              <path d="M6 7 l2 3 M11 5 l2 3 M16 4 l2 3 M3 13 H22" stroke="#ddd" strokeWidth="1.500" />
              <path d="M8 21 v-4 l3 4 v-4 M14 21 l2 -4 l2 4" stroke="#ccc" fill="none" />
            </Svg>
            obj
          </Crumb>
          <Svg $w={12} $h={27} viewBox="0 0 12 27"><path d="M4 0 L10 13 L4 27" fill="none" stroke="#aaa" strokeWidth="2" /></Svg>
          <Crumb>
            <Svg $w={24} $h={24} viewBox="0 0 24 24">
              <rect x="2" y="3" width="9" height="15" rx="3" fill="#7689b0" />
              <circle cx="18" cy="12" r="6" fill="#c93a32" />
              <path d="M13 9 L18 21 Q13 25 8 21 Z" fill="#ead24a" />
            </Svg>
            Dungeon_generator1
          </Crumb>
          <PathDrop aria-label="Path history">
            <Svg $w={10} $h={10} viewBox="0 0 10 10"><path d="M1 1 H9 L5 9 Z" fill="#fff" /></Svg>
          </PathDrop>
        </PathBox>
        <IconButton $w={30} aria-label="Pin">
          <Svg $w={24} $h={24} viewBox="0 0 24 24">
            <path d="M2 11 H9 M9 5 L11 18 M10 7 L18 9 L20 16 L11 16 M20 4 V19" fill="none" stroke="#777" strokeWidth="2" />
          </Svg>
        </IconButton>
        <IconButton $w={30} aria-label="Link">
          <Svg $w={24} $h={24} viewBox="0 0 24 24">
            <path d="M21 8 A10 10 0 1 0 8 22 M18 9 A6 6 0 1 0 10 18" fill="none" stroke="#6c89b2" strokeWidth="2" />
            <circle cx="13" cy="13" r="2" fill="none" stroke="#6c89b2" strokeWidth="2" />
          </Svg>
        </IconButton>
        <Spacer $w={12} />
        <IconButton $w={34} aria-label="Network settings">
          <Svg $w={30} $h={30} viewBox="-3 -1 30 30"><GearShape /></Svg>
        </IconButton>
      </PathBar>
      <Tools>
        <ToolGrip />
        <ToolSet names={["tree", "list", "page", "palette"]} after={14} />
        <ToolSet names={["box", "sticky", "dot"]} />
        <ToolSet names={["alignV", "alignH", "stairA", "stairB", "snap", "gridlines"]} push after={14} />
        <ToolSet names={["find", "eye"]} after={4} />
      </Tools>
      <NetworkCanvas />
    </Network>
  );
}

/* ---------- app ---------- */

export default function App() {
  return (
    <>
      <Global />
      <Desktop>
        <LeftPane>
          <OperationBar />
          <Stage>
            <Viewport>
              <DungeonScene />
              <CameraMenus>
                {["top2", "no cam"].map((t) => (
                  <CameraButton key={t}>
                    {t}
                    <Svg $w={9} $h={6} viewBox="0 0 9 6"><path d="M0 0 H9 L4.500 6 Z" fill="#dede2a" /></Svg>
                  </CameraButton>
                ))}
              </CameraMenus>
            </Viewport>
            <Strip>
              <StripHead>
                <Svg $w={8} $h={8} viewBox="0 0 8 8"><path d="M1 0 L7 4 L1 8 Z" fill="#555" /></Svg>
              </StripHead>
              <StripGroup>
                <StripButton name="plane" h={31} />
                <StripButton name="camera" h={31} />
              </StripGroup>
              <StripGroup>
                <StripButton name="light" />
                <StripButton name="headlight" />
                <StripButton name="normal" active />
                <StripButton name="quality" />
                <StripButton name="shadow" />
              </StripGroup>
              <StripGroup $gap={0}>
                <StripButton name="hand" h={34} />
              </StripGroup>
              <StripRule />
              <StripGroup $gap={0}>
                <Svg $w={8} $h={8} />
                {["point", "normalPoint", "trail", "pointNumber", "primNormal", "primNumber", "hull", "bounds", "axes", "label", "note", "image"].map((n) => (
                  <StripButton key={n} name={n} h={33} />
                ))}
                <Svg $w={8} $h={12} />
              </StripGroup>
              <StripRule />
              <StripGroup>
                <Svg $w={8} $h={8} />
                <StripButton name="grid" active />
                <StripButton name="eye" />
              </StripGroup>
            </Strip>
          </Stage>
        </LeftPane>
        <VSplit>
          <VHandle viewBox="0 0 8 90">
            <path d="M6 2 V11 L0 6.500 Z M0 66 V75 L6 70.500 Z" fill="#111" />
            <path d="M1 30 H5 M1 34 H5 M1 38 H5 M1 42 H5 M1 46 H5 M1 50 H5" stroke="#333" strokeDasharray="1 1" />
          </VHandle>
        </VSplit>
        <RightPane>
          <ParameterPane />
          <HSplit>
            <Svg $w={70} $h={6} viewBox="0 0 70 6">
              <path d="M0 6 H8 L4 0 Z M62 0 H70 L66 6 Z" fill="#111" />
              <path d="M28 2 H48 M28 5 H48" stroke="#333" strokeDasharray="2 2" />
            </Svg>
          </HSplit>
          <NetworkPane />
        </RightPane>
      </Desktop>
    </>
  );
}
